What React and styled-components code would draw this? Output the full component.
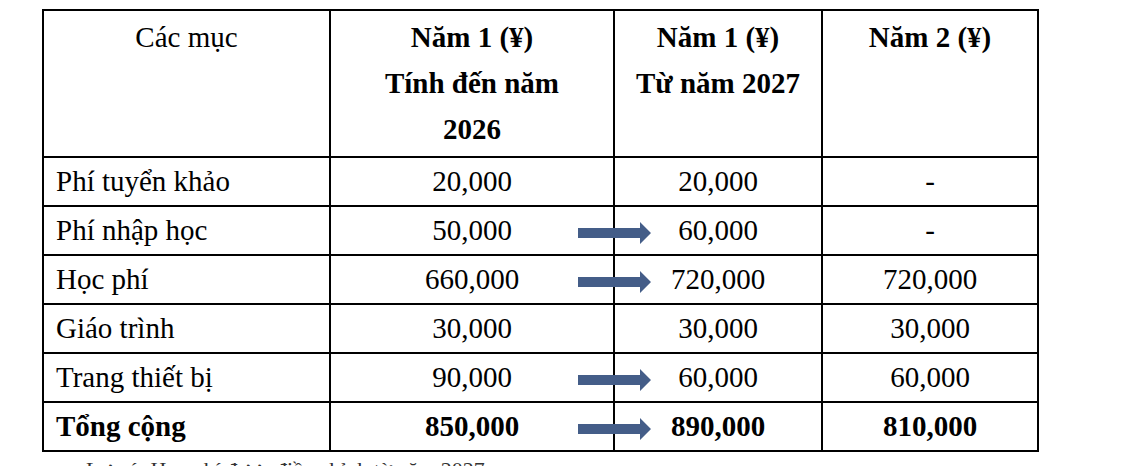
import React from 'react';
import styled, { createGlobalStyle } from 'styled-components';

const GlobalStyle = createGlobalStyle`
  html, body {
    margin: 0;
    padding: 0;
    background: #fff;
  }
  body {
    font-family: "Liberation Serif", "Times New Roman", serif;
    color: #000;
  }
`;

const Page = styled.div`
  padding: 9px 0 0 42px;
  height: 466px;
  box-sizing: border-box;
  overflow: hidden;
`;

const Table = styled.table`
  border-collapse: collapse;
  table-layout: fixed;
  width: 995px;
  font-family: "Liberation Serif", "Times New Roman", serif;
  font-size: 29px;
  color: #000;
`;

const Col = styled.col`
  width: ${p => p.$w}px;
`;

const HeadRow = styled.tr`
  height: 147px;
`;

const HeadCell = styled.th`
  border: 2px solid #000;
  padding: 3px 4px 0;
  vertical-align: top;
  text-align: center;
  line-height: 46px;
  font-family: "Liberation Serif", "Times New Roman", serif;
  font-weight: ${p => (p.$plain ? 400 : 700)};
`;

const HeadLine = styled.div`
  white-space: nowrap;
`;

const Row = styled.tr`
  height: 49px;
  font-weight: ${p => (p.$total ? 700 : 400)};
`;

const LabelCell = styled.td`
  border: 2px solid #000;
  padding: 0 12px;
  text-align: left;
  vertical-align: middle;
  white-space: nowrap;
  font-family: "Liberation Serif", "Times New Roman", serif;
`;

const ValueCell = styled.td`
  position: relative;
  border: 2px solid #000;
  padding: 0 4px;
  text-align: center;
  vertical-align: middle;
  white-space: nowrap;
  font-family: "Liberation Serif", "Times New Roman", serif;
`;

const ArrowMark = styled.svg`
  position: absolute;
  left: -37px;
  top: 50%;
  margin-top: -9px;
  width: 73px;
  height: 22px;
`;

const Note = styled.p`
  margin: 5px 0 0 44px;
  font-family: "Liberation Serif", "Times New Roman", serif;
  font-size: 22px;
  line-height: 26px;
  color: #333;
  white-space: nowrap;
`;

function Arrow() {
  return (
    <ArrowMark viewBox="0 0 73 22">
      <polygon points="0,6 62,6 62,0 73,11 62,22 62,16 0,16" fill="#445d88" />
    </ArrowMark>
  );
}

const rows = [
  { label: 'Phí tuyển khảo', y1: '20,000', y1b: '20,000', y2: '-' },
  { label: 'Phí nhập học', y1: '50,000', y1b: '60,000', y2: '-', arrow: true },
  { label: 'Học phí', y1: '660,000', y1b: '720,000', y2: '720,000', arrow: true },
  { label: 'Giáo trình', y1: '30,000', y1b: '30,000', y2: '30,000' },
  { label: 'Trang thiết bị', y1: '90,000', y1b: '60,000', y2: '60,000', arrow: true },
  { label: 'Tổng cộng', y1: '850,000', y1b: '890,000', y2: '810,000', arrow: true, total: true },
];

export default function App() {
  return (
    <Page>
      <GlobalStyle />
      <Table>
        <colgroup>
          <Col $w={287} />
          <Col $w={284} />
          <Col $w={208} />
          <Col $w={216} />
        </colgroup>
        <thead>
          <HeadRow>
            <HeadCell $plain>
              <HeadLine>Các mục</HeadLine>
            </HeadCell>
            <HeadCell>
              <HeadLine>Năm 1 (¥)</HeadLine>
              <HeadLine>Tính đến năm</HeadLine>
              <HeadLine>2026</HeadLine>
            </HeadCell>
            <HeadCell>
              <HeadLine>Năm 1 (¥)</HeadLine>
              <HeadLine>Từ năm 2027</HeadLine>
            </HeadCell>
            <HeadCell>
              <HeadLine>Năm 2 (¥)</HeadLine>
            </HeadCell>
          </HeadRow>
        </thead>
        <tbody>
          {rows.map(r => (
            <Row key={r.label} $total={r.total}>
              <LabelCell>{r.label}</LabelCell>
              <ValueCell>{r.y1}</ValueCell>
              <ValueCell>
                {r.arrow && <Arrow />}
                {r.y1b}
              </ValueCell>
              <ValueCell>{r.y2}</ValueCell>
            </Row>
          ))}
        </tbody>
      </Table>
      <Note>Lưu ý: Học phí được điều chỉnh từ năm 2027.</Note>
    </Page>
  );
}
